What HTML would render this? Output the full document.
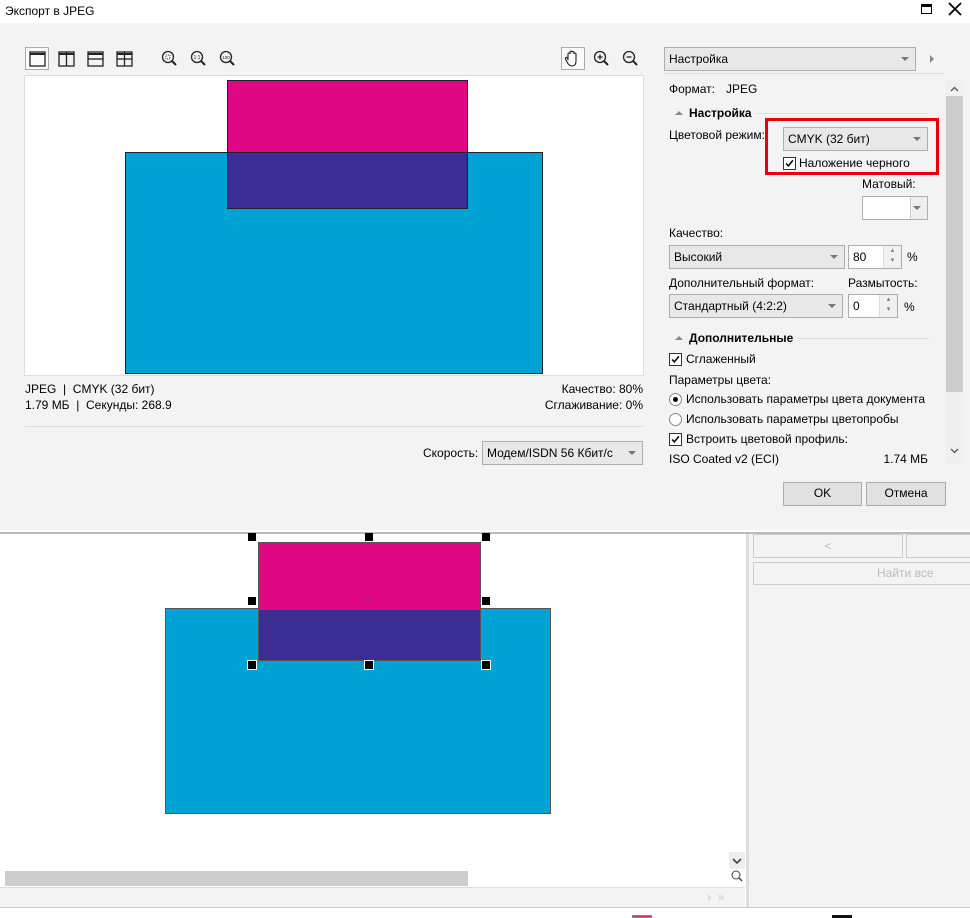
<!DOCTYPE html>
<html><head><meta charset="utf-8"><style>
*{box-sizing:border-box;margin:0;padding:0}
body{width:970px;height:918px;position:relative;overflow:hidden;background:#fff;font-family:"Segoe UI","Liberation Sans",sans-serif;font-size:12px;color:#000}
.a{position:absolute}
.t{position:absolute;white-space:nowrap;font-size:12px;line-height:14px}
.dd{position:absolute;background:#e8e8e8;border:1px solid #adadad}
.dd::after{content:"";position:absolute;right:6px;top:50%;margin-top:-2px;border-left:4px solid transparent;border-right:4px solid transparent;border-top:4px solid #777}
.cb{position:absolute;width:13px;height:13px;border:1px solid #333;background:#fff}
.rd{position:absolute;width:13px;height:13px;border:1px solid #888;border-radius:50%;background:#fff}
.btn{position:absolute;background:#e1e1e1;border:1px solid #adadad;text-align:center;line-height:21px;font-size:12px}
.h{position:absolute;width:8px;height:8px;background:#000}
.spin{position:absolute;background:#fff;border:1px solid #adadad}
.spin .ar{position:absolute;right:0;top:0;width:18px;height:100%;background:#f0f0f0;border-left:1px solid #ddd;font-size:7px;color:#777;text-align:center;line-height:10px}
</style></head><body>
<svg width="0" height="0" style="position:absolute"><defs><symbol id="ck" viewBox="0 0 13 13"><path d="M2.5 6.5 L5.2 9.3 L10.5 2.8" fill="none" stroke="#000" stroke-width="1.8"/></symbol></defs></svg>
<!-- title -->
<div class="t" style="left:5px;top:4px;font-size:12px">Экспорт в JPEG</div>
<div class="a" style="left:921px;top:4px;width:11px;height:10px;border:1.5px solid #000;border-top-width:3px"></div>
<svg class="a" style="left:947px;top:1px" width="16" height="16"><path d="M2 2 L14 14 M14 2 L2 14" stroke="#000" stroke-width="1.8"/></svg>
<!-- dialog bg -->
<div class="a" style="left:0;top:23px;width:970px;height:507px;background:#f3f3f3"></div>
<!-- toolbar -->
<div class="a" style="left:25px;top:47px;width:24px;height:23px;border:1px solid #aaa;background:#fafafa"></div>
<svg class="a" style="left:20px;top:42px" width="240" height="36" viewBox="0 0 240 36" fill="none" stroke="#222" stroke-width="1.3">
<rect x="10" y="10" width="15" height="14"/><line x1="10" y1="12" x2="25" y2="12" stroke-width="2"/>
<rect x="39" y="10" width="15" height="14"/><line x1="39" y1="12" x2="54" y2="12" stroke-width="2"/><line x1="46.5" y1="10" x2="46.5" y2="24"/>
<rect x="68" y="10" width="15" height="14"/><line x1="68" y1="12" x2="83" y2="12" stroke-width="2"/><line x1="68" y1="17" x2="83" y2="17"/>
<rect x="97" y="10" width="15" height="14"/><line x1="97" y1="12" x2="112" y2="12" stroke-width="2"/><line x1="97" y1="17" x2="112" y2="17"/><line x1="104.5" y1="10" x2="104.5" y2="24"/>
<circle cx="148" cy="15" r="5.5"/><line x1="152" y1="19" x2="156" y2="23" stroke-width="2"/>
<rect x="146" y="13" width="4" height="4" stroke-width="0.8" stroke-dasharray="1 1"/>
<circle cx="177" cy="15" r="5.5"/><line x1="181" y1="19" x2="185" y2="23" stroke-width="2"/>
<circle cx="206" cy="15" r="5.5"/><line x1="210" y1="19" x2="214" y2="23" stroke-width="2"/>
<text x="177" y="17" font-size="5" font-family="Liberation Sans" text-anchor="middle" fill="#222" stroke="none">1:1</text>
<text x="206" y="17" font-size="4.5" font-family="Liberation Sans" text-anchor="middle" fill="#222" stroke="none">100</text>
</svg>
<div class="a" style="left:561px;top:47px;width:24px;height:23px;border:1px solid #aaa;background:#fafafa"></div>
<svg class="a" style="left:561px;top:47px" width="24" height="23" fill="none" stroke="#222" stroke-width="1.1">
<path d="M7 13 V7 a1 1 0 0 1 2 0 V5 a1 1 0 0 1 2 0 V5.5 a1 1 0 0 1 2 0 V7 a1 1 0 0 1 2 0 V14 Q15 19 11 19 Q8 19 6 15 L4.5 12 a1 1 0 0 1 2 -1 L7 13"/>
</svg>
<svg class="a" style="left:590px;top:47px" width="50" height="24" fill="none" stroke="#222" stroke-width="1.3">
<circle cx="10" cy="10" r="5.5"/><line x1="14" y1="14" x2="18" y2="18" stroke-width="2"/><line x1="7.5" y1="10" x2="12.5" y2="10"/><line x1="10" y1="7.5" x2="10" y2="12.5"/>
<circle cx="39" cy="10" r="5.5"/><line x1="43" y1="14" x2="47" y2="18" stroke-width="2"/><line x1="36.5" y1="10" x2="41.5" y2="10"/>
</svg>
<!-- preview -->
<div class="a" style="left:24px;top:75px;width:620px;height:301px;background:#fff;border:1px solid #ddd"></div>
<div class="a" style="left:125px;top:152px;width:418px;height:222px;background:#00a3d3;border:1px solid #222"></div>
<div class="a" style="left:227px;top:80px;width:241px;height:73px;background:#e00785;border:1px solid #222;border-bottom:none"></div>
<div class="a" style="left:227px;top:152px;width:241px;height:57px;background:#3c2d93;border:1px solid #222"></div>
<div class="t" style="left:25px;top:382px">JPEG&nbsp; | &nbsp;CMYK (32 бит)</div>
<div class="t" style="left:25px;top:398px">1.79 МБ&nbsp; | &nbsp;Секунды: 268.9</div>
<div class="t" style="right:327px;top:382px">Качество: 80%</div>
<div class="t" style="right:327px;top:398px">Сглаживание: 0%</div>
<div class="a" style="left:25px;top:426px;width:618px;height:1px;background:#ddd"></div>
<div class="t" style="left:423px;top:446px">Скорость:</div>
<div class="dd" style="left:482px;top:441px;width:161px;height:24px"><div class="t" style="left:4px;top:4px">Модем/ISDN 56 Кбит/с</div></div>
<!-- right panel -->
<div class="dd" style="left:664px;top:47px;width:252px;height:24px"><div class="t" style="left:4px;top:4px">Настройка</div></div>
<div class="a" style="left:930px;top:55px;border-top:4px solid transparent;border-bottom:4px solid transparent;border-left:4px solid #888"></div>
<div class="a" style="left:664px;top:73px;width:280px;height:1px;background:#ddd"></div>
<div class="t" style="left:669px;top:82px">Формат:</div>
<div class="t" style="left:726px;top:82px">JPEG</div>
<div class="a" style="left:946px;top:80px;width:17px;height:384px;background:#f0f0f0"></div>
<div class="a" style="left:946px;top:96px;width:17px;height:296px;background:#cdcdcd"></div>
<svg class="a" style="left:946px;top:80px" width="17" height="384" fill="none" stroke="#555" stroke-width="1.3"><path d="M5 11 L8.5 7.5 L12 11"/><path d="M5 369 L8.5 372.5 L12 369"/></svg>
<div class="a" style="left:675px;top:111px;border-left:4px solid transparent;border-right:4px solid transparent;border-bottom:4px solid #888"></div>
<div class="t" style="left:689px;top:106px;font-weight:bold">Настройка</div>
<div class="a" style="left:755px;top:113px;width:174px;height:1px;background:#ddd"></div>
<div class="t" style="left:669px;top:128px">Цветовой режим:</div>
<div class="dd" style="left:783px;top:127px;width:145px;height:24px"><div class="t" style="left:4px;top:4px">CMYK (32 бит)</div></div>
<div class="cb" style="left:783px;top:157px"><svg width="11" height="11" viewBox="0 0 13 13"><use href="#ck"/></svg></div>
<div class="t" style="left:799px;top:156px">Наложение черного</div>
<div class="a" style="left:765px;top:118px;width:174px;height:57px;border:3px solid #e8000b"></div>
<div class="t" style="left:862px;top:177px">Матовый:</div>
<div class="dd" style="left:862px;top:196px;width:66px;height:24px;background:#fff"><div class="a" style="right:0;top:0;width:17px;height:22px;background:#eee;border-left:1px solid #ccc"></div></div>
<div class="t" style="left:669px;top:226px">Качество:</div>
<div class="dd" style="left:669px;top:245px;width:176px;height:24px"><div class="t" style="left:4px;top:4px">Высокий</div></div>
<div class="spin" style="left:848px;top:245px;width:54px;height:24px"><div class="t" style="left:4px;top:4px">80</div><div class="ar">▴<br>▾</div></div>
<div class="t" style="left:907px;top:250px">%</div>
<div class="t" style="left:669px;top:276px">Дополнительный формат:</div>
<div class="t" style="left:848px;top:276px">Размытость:</div>
<div class="dd" style="left:669px;top:294px;width:174px;height:24px"><div class="t" style="left:4px;top:4px">Стандартный (4:2:2)</div></div>
<div class="spin" style="left:848px;top:294px;width:50px;height:24px"><div class="t" style="left:4px;top:4px">0</div><div class="ar">▴<br>▾</div></div>
<div class="t" style="left:904px;top:300px">%</div>
<div class="a" style="left:675px;top:336px;border-left:4px solid transparent;border-right:4px solid transparent;border-bottom:4px solid #888"></div>
<div class="t" style="left:689px;top:331px;font-weight:bold">Дополнительные</div>
<div class="a" style="left:798px;top:338px;width:131px;height:1px;background:#ddd"></div>
<div class="cb" style="left:669px;top:353px"><svg width="11" height="11" viewBox="0 0 13 13"><use href="#ck"/></svg></div>
<div class="t" style="left:686px;top:352px">Сглаженный</div>
<div class="t" style="left:669px;top:373px">Параметры цвета:</div>
<div class="rd" style="left:669px;top:393px"><div class="a" style="left:3px;top:3px;width:5px;height:5px;border-radius:50%;background:#000"></div></div>
<div class="t" style="left:686px;top:392px">Использовать параметры цвета документа</div>
<div class="rd" style="left:669px;top:413px"></div>
<div class="t" style="left:686px;top:412px">Использовать параметры цветопробы</div>
<div class="cb" style="left:669px;top:433px"><svg width="11" height="11" viewBox="0 0 13 13"><use href="#ck"/></svg></div>
<div class="t" style="left:686px;top:432px">Встроить цветовой профиль:</div>
<div class="t" style="left:669px;top:452px">ISO Coated v2 (ECI)</div>
<div class="t" style="right:42px;top:452px">1.74 МБ</div>
<div class="btn" style="left:783px;top:482px;width:79px;height:24px">OK</div>
<div class="btn" style="left:866px;top:482px;width:80px;height:24px">Отмена</div>
<!-- bottom area -->
<div class="a" style="left:0;top:532px;width:970px;height:2px;background:#bbb"></div>
<div class="a" style="left:746px;top:534px;width:224px;height:384px;background:#f3f3f3;border-left:3px solid #ddd"></div>
<div class="a" style="left:753px;top:534px;width:150px;height:24px;border:1px solid #ccc;text-align:center;color:#bbb;line-height:22px">&lt;</div>
<div class="a" style="left:906px;top:534px;width:70px;height:24px;border:1px solid #ccc"></div>
<div class="a" style="left:753px;top:562px;width:220px;height:23px;border:1px solid #ccc;color:#bbb;line-height:21px;padding-left:123px">Найти все</div>
<div class="a" style="left:165px;top:608px;width:386px;height:206px;background:#00a3d3;border:1px solid #555"></div>
<div class="a" style="left:258px;top:542px;width:223px;height:68px;background:#e00785;border:1px solid #555;border-bottom:none"></div>
<div class="a" style="left:258px;top:609px;width:223px;height:52px;background:#3c2d93;border:1px solid #555"></div>
<div class="h" style="left:248px;top:533px"></div><div class="h" style="left:365px;top:533px"></div><div class="h" style="left:482px;top:533px"></div>
<div class="h" style="left:248px;top:597px"></div><div class="h" style="left:482px;top:597px"></div>
<div class="h" style="left:248px;top:661px;outline:1px solid #fff"></div><div class="h" style="left:365px;top:661px;outline:1px solid #fff"></div><div class="h" style="left:482px;top:661px;outline:1px solid #fff"></div>
<div class="t" style="left:365px;top:594px;font-size:9px;color:#555">×</div>
<div class="a" style="left:729px;top:852px;width:16px;height:17px;background:#eee"></div>
<svg class="a" style="left:729px;top:852px" width="16" height="34" fill="none" stroke="#444" stroke-width="1.6"><path d="M4 7 L8 11 L12 7"/><path d="M-8 20 L-5 23 L-8 26"/><circle cx="7" cy="23" r="4" stroke-width="1"/><line x1="10" y1="26" x2="13" y2="29" stroke-width="1.5"/></svg>
<div class="a" style="left:5px;top:871px;width:463px;height:15px;background:#cdcdcd"></div>
<div class="a" style="left:0;top:887px;width:745px;height:20px;background:#f3f3f3;border-top:1px solid #ddd"></div>
<div class="t" style="left:707px;top:890px;color:#ccc">›&nbsp;&nbsp;»</div>
<div class="a" style="left:0;top:907px;width:970px;height:11px;background:#fff;border-top:1px solid #ccc"></div>
<div class="a" style="left:632px;top:915px;width:20px;height:3px;background:#c36;border:1px solid #888"></div>
<div class="a" style="left:832px;top:915px;width:20px;height:3px;background:#111"></div>
</body></html>
